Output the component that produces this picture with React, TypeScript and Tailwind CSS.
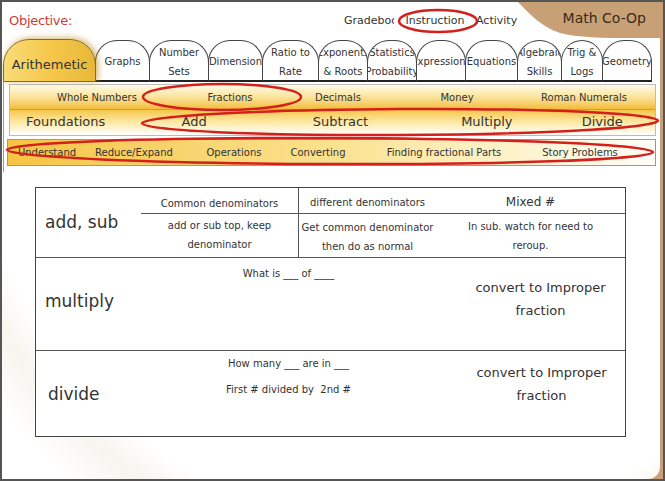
import React from "react";

const font = { fontFamily: '"DejaVu Sans", "Liberation Sans", sans-serif' };

type Tab = { label: string[]; w: string };

const tabs: Tab[] = [
  { label: ["Graphs"], w: "w-[55px]" },
  { label: ["Number", "Sets"], w: "w-[60px]" },
  { label: ["Dimension"], w: "w-[55px]" },
  { label: ["Ratio to", "Rate"], w: "w-[57px]" },
  { label: ["Exponents", "& Roots"], w: "w-[50px]" },
  { label: ["Statistics", "Probability"], w: "w-[50px]" },
  { label: ["Expressions"], w: "w-[50px]" },
  { label: ["Equations"], w: "w-[53px]" },
  { label: ["Algebraic", "Skills"], w: "w-[45px]" },
  { label: ["Trig &", "Logs"], w: "w-[42px]" },
  { label: ["Geometry"], w: "w-[50px]" },
];

const topics = [
  { t: "Whole Numbers", w: "w-[174px]" },
  { t: "Fractions", w: "w-[92px]" },
  { t: "Decimals", w: "w-[124px]" },
  { t: "Money", w: "w-[114px]" },
  { t: "Roman Numerals", w: "w-[140px]" },
];

const ops = [
  { t: "Add", w: "w-[126px]" },
  { t: "Subtract", w: "w-[168px]" },
  { t: "Multiply", w: "w-[126px]" },
  { t: "Divide", w: "w-[106px]" },
];

const steps = [
  { t: "Understand", w: "w-[78px]" },
  { t: "Reduce/Expand", w: "w-[96px]" },
  { t: "Operations", w: "w-[104px]" },
  { t: "Converting", w: "w-[64px]" },
  { t: "Finding fractional Parts", w: "w-[188px]" },
  { t: "Story Problems", w: "w-[84px]" },
];

export default function App() {
  return (
    <div
      className="w-[665px] h-[481px] border-2 border-[#555] bg-[#c8a076] overflow-hidden text-[#333]"
      style={font}
    >
      <div className="relative h-full mr-[3px] rounded-br-[12px] overflow-hidden bg-[radial-gradient(circle_at_62%_18%,#ffffff_0%,#ffffff_78%,#f8f5ef_84%,#ffffff_92%)]">
        {/* tan corner */}
        <svg className="absolute top-0 left-0" width="665" height="40">
          <path d="M516 0 C528 12 538 24 558 31 C580 37 620 36 665 36 L665 0 Z" fill="#c8a076" />
        </svg>

        {/* header */}
        <div className="relative flex items-center h-[36px] pt-[2px]">
          <span className="pl-[7px] text-[13px] text-[#cc3b3b] tracking-[-0.3px]">Objective:</span>
          <div className="flex ml-[272px] gap-[4px] text-[11px]">
            <span className="w-[50px] overflow-hidden whitespace-nowrap">Gradebook</span>
            <span className="w-[74px] text-center">Instruction</span>
            <span>Activity</span>
          </div>
          <span className="ml-auto mr-[14px] -mt-[6px] text-[14px] text-[#3a2a1a]">Math Co-Op</span>
        </div>

        {/* tabs */}
        <div className="relative flex items-end h-[44px] pl-[1px]">
          <div className="w-[93px] h-[43px] rounded-t-[26px] border border-[#8a6a20] bg-gradient-to-r from-[#f9dc78] via-[#f6c84a] to-[#e8b838] shadow-[2px_-1px_6px_rgba(190,150,40,0.7)] flex items-center justify-center text-[13px] pt-[8px] z-10">
            Arithemetic
          </div>
          {tabs.map((tab) => (
            <div
              key={tab.label.join()}
              className={`${tab.w} h-[42px] -ml-[1px] shrink-0 rounded-t-[22px] border border-[#444] border-b-[#222] border-b-2 bg-white flex flex-col items-center justify-center overflow-hidden text-[10px] leading-[19px] whitespace-nowrap pt-[2px]`}
            >
              {tab.label.map((l) => (
                <span key={l}>{l}</span>
              ))}
            </div>
          ))}
        </div>

        {/* menus */}
        <div className="relative border-l border-[#999] ml-[1px] pt-[2px] pb-[6px]">
          <div className="ml-[5px] mr-[4px] border border-[#bbb]">
            <div className="flex h-[25px] items-center text-[10px] bg-gradient-to-b from-[#fffbe8] via-[#fbe39a] to-[#f2bd36] border-b border-[#c9a040]">
              {topics.map((x) => (
                <span key={x.t} className={`${x.w} text-center whitespace-nowrap`}>
                  {x.t}
                </span>
              ))}
            </div>
            <div className="flex h-[25px] items-center text-[13px] pb-[2px] bg-gradient-to-b from-[#f5c746] via-[#fde9a6] to-white">
              <span className="w-[122px] pl-[16px] whitespace-nowrap">Foundations</span>
              {ops.map((x) => (
                <span key={x.t} className={`${x.w} text-center whitespace-nowrap`}>
                  {x.t}
                </span>
              ))}
            </div>
          </div>
          <div className="mt-[3px] ml-[3px] mr-[4px] h-[27px] border border-[#999] flex items-center text-[10px] bg-gradient-to-r from-[#f5c440] via-[#fbe28e] to-[#fffef8]">
            {steps.map((x) => (
              <span key={x.t} className={`${x.w} shrink-0 text-center whitespace-nowrap`}>
                {x.t}
              </span>
            ))}
          </div>
        </div>

        {/* table */}
        <div className="relative ml-[33px] mt-[15px] w-[591px] bg-white border border-[#444] text-[#333]">
          <div className="flex h-[70px] border-b border-[#555]">
            <div className="w-[105px] flex items-center pl-[9px] text-[17px]">add, sub</div>
            <div className="flex-1 flex flex-col">
              <div className="flex h-[26px] items-end border-b border-[#555] text-[10px]">
                <span className="w-[157px] text-center pb-[2px]">Common denominators</span>
                <span className="w-[138px] self-stretch border-l border-[#555] text-center pt-[7px]">different denominators</span>
                <span className="flex-1 text-center text-[12px] pb-[2px]">Mixed #</span>
              </div>
              <div className="flex flex-1 text-[10px] leading-[19px]">
                <span className="w-[157px] text-center pt-[2px]">
                  add or sub top, keep
                  <br />
                  denominator
                </span>
                <span className="w-[138px] border-l border-[#555] text-center pt-[4px]">
                  Get common denominator
                  <br />
                  then do as normal
                </span>
                <span className="flex-1 text-center pt-[3px]">
                  In sub. watch for need to
                  <br />
                  reroup.
                </span>
              </div>
            </div>
          </div>
          <div className="flex h-[93px] border-b border-[#555]">
            <div className="w-[105px] flex items-center pl-[9px] text-[17px] pb-[4px]">multiply</div>
            <div className="w-[295px] text-center text-[10px] pt-[8px]">What is ___ of ____</div>
            <div className="flex-1 text-center text-[13px] leading-[23px] pt-[18px] pl-[20px]">
              convert to Improper
              <br />
              fraction
            </div>
          </div>
          <div className="flex h-[85px]">
            <div className="w-[105px] flex items-center pl-[12px] text-[17px] pt-[2px]">divide</div>
            <div className="w-[295px] text-center text-[10px] leading-[26px]">
              How many ___ are in ___
              <br />
              First # divided by&nbsp; 2nd #
            </div>
            <div className="flex-1 text-center text-[13px] leading-[23px] pt-[10px] pl-[22px]">
              convert to Improper
              <br />
              fraction
            </div>
          </div>
        </div>

        {/* red marks */}
        <svg className="absolute top-0 left-0 pointer-events-none" width="665" height="481" fill="none" stroke="#d4201c" strokeWidth="2.5">
          <ellipse cx="436" cy="19" rx="39" ry="11" />
          <ellipse cx="220" cy="95" rx="79" ry="13" />
          <ellipse cx="398" cy="120" rx="258" ry="13" transform="rotate(-0.3 398 120)" />
          <ellipse cx="328" cy="149" rx="323" ry="13" transform="rotate(0.2 328 149)" />
        </svg>
      </div>
    </div>
  );
}
